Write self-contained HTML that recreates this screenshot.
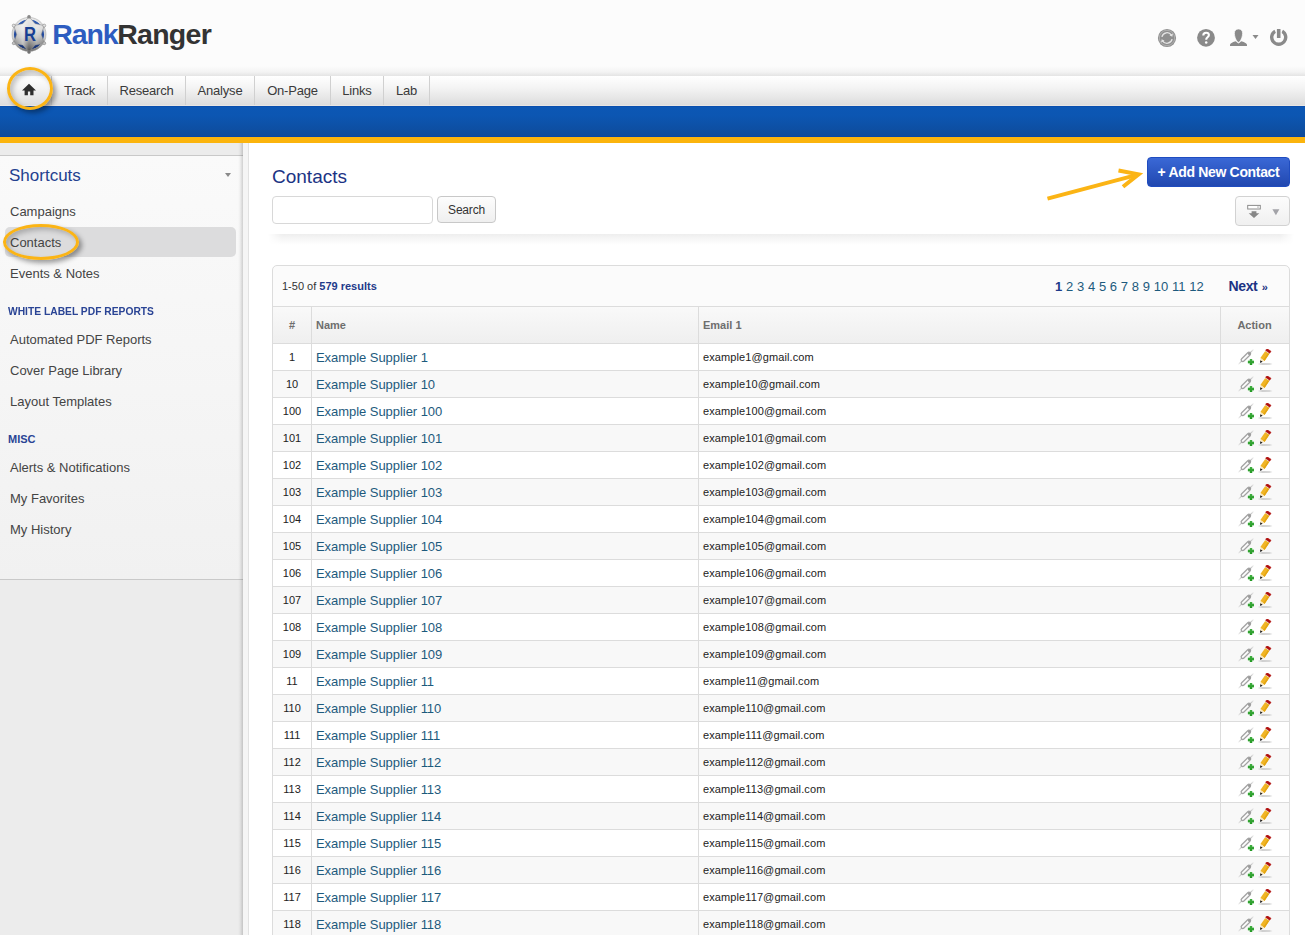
<!DOCTYPE html>
<html><head><meta charset="utf-8"><title>Contacts</title>
<style>
*{box-sizing:border-box;margin:0;padding:0}
html,body{width:1305px;height:935px;overflow:hidden;background:#fff;font-family:"Liberation Sans",sans-serif;}
body{position:relative}
.abs{position:absolute}
#hdr{position:absolute;left:0;top:0;width:1305px;height:76px;background:linear-gradient(#fcfcfc 0,#fcfcfc 66px,#f3f3f3 72px,#e4e4e4 76px)}
#nav{position:absolute;left:0;top:76px;width:1305px;height:30px;background:linear-gradient(#ffffff 0%,#f4f4f4 40%,#dddddd 100%);border-bottom:1px solid #e9e6e3}
.nv{position:absolute;top:0;height:29px;border-right:1px solid #d0d0d0;font-size:13px;line-height:29px;letter-spacing:-0.2px;color:#3a3a3a;text-align:center}
#blue{position:absolute;left:0;top:106px;width:1305px;height:31px;background:linear-gradient(#0c57b4 0%,#0c56b2 30%,#0e4b9b 100%);border-top:1px solid #0a4fae;border-bottom:1px solid #0746a6}
#yel{position:absolute;left:0;top:137px;width:1305px;height:6px;background:#fbb40d}
#side{position:absolute;left:0;top:143px;width:243px;height:792px;background:#ececec}
#sideshadow{position:absolute;left:238px;top:143px;width:5px;height:792px;background:linear-gradient(90deg,rgba(0,0,0,0) 0,rgba(0,0,0,0.04) 40%,rgba(0,0,0,0.17) 100%)}
#sidein{position:absolute;left:0;top:12px;width:243px;height:425px;background:linear-gradient(#fafafa,#f1f1f1);border-top:1px solid #c9c9c9;border-bottom:1px solid #c9c9c9}
#gut{position:absolute;left:243px;top:143px;width:6px;height:792px;background:#f5f5f5;border-right:1px solid #e2e2e2}
.sl{position:absolute;left:10px;font-size:13px;color:#444;line-height:16px;white-space:nowrap}
.sh{position:absolute;left:8px;font-size:11px;font-weight:bold;color:#2a4495;transform-origin:0 50%;line-height:13px;white-space:nowrap}
.r{position:absolute;left:273px;width:1016px;height:27px;border-bottom:1px solid #dcdcdc;background:#fff;font-size:11px;line-height:27px;color:#222}
.r.alt{background:#f8f8f8}
.r span{position:absolute;top:0;height:26px;white-space:nowrap}
.c1{left:0;width:38px;text-align:center}
.c2{left:43px;font-size:13px;letter-spacing:-0.05px;color:#1d5a7d}
.c3{left:430px;letter-spacing:0.1px}
.c4{left:947px;width:69px}
.ic1{position:absolute;left:18px;top:5px}
.ic2{position:absolute;left:37px;top:5px}
.vl{position:absolute;width:1px;background:#dcdcdc}
</style></head><body>
<svg width="0" height="0" style="position:absolute">
<defs>
<g id="plug"><defs><linearGradient id="pln" x1="0" y1="1" x2="1" y2="0"><stop offset="0" stop-color="#aaa" stop-opacity="0"/><stop offset="0.25" stop-color="#a8a8a8"/><stop offset="0.75" stop-color="#a8a8a8"/><stop offset="1" stop-color="#aaa" stop-opacity="0"/></linearGradient><linearGradient id="pgr" x1="0" y1="0" x2="0" y2="1"><stop offset="0" stop-color="#5cc05c"/><stop offset="1" stop-color="#158a15"/></linearGradient></defs><path d="M0 15.7 L15.9 0" stroke="url(#pln)" stroke-width="1.1" fill="none"/><path d="M4.8 10.9 L10.9 4.9" stroke="#a2a2a2" stroke-width="4.5" stroke-linecap="round" fill="none"/><path d="M4.8 10.9 L10.9 4.9" stroke="#fbfbfb" stroke-width="2.0" stroke-linecap="round" fill="none"/><circle cx="11.2" cy="4.7" r="1.3" fill="#9a9a9a"/><path d="M9.9 13h6.2M13 9.9v6.2" stroke="url(#pgr)" stroke-width="2.3"/><path d="M9.9 13h6.2M13 9.9v6.2" stroke="#2ea32e" stroke-width="2.3" opacity="0.55"/></g>
<g id="pencil"><defs><linearGradient id="psh" x1="0" y1="0" x2="1" y2="0"><stop offset="0" stop-color="#bdbdbd" stop-opacity="0.2"/><stop offset="0.3" stop-color="#bdbdbd"/><stop offset="0.8" stop-color="#c9c9c9"/><stop offset="1" stop-color="#d5d5d5" stop-opacity="0.2"/></linearGradient></defs><rect x="1.2" y="14.3" width="14" height="1.4" fill="url(#psh)"/><path d="M7.52 11.91 L12.37 4.82 L8.24 2.00 L3.39 9.09Z" fill="#f0b526"/><path d="M7.52 11.91 L12.37 4.82 L11.03 3.90 L6.18 10.99Z" fill="#e4a512"/><path d="M4.93 13.04 L7.52 11.91 L3.39 9.09 L3.28 11.92Z" fill="#f8e6c0"/><path d="M3.09 13.96 L5.58 12.76 L3.31 11.21Z" fill="#111"/><path d="M12.37 4.82 L12.76 4.24 L8.64 1.42 L8.24 2.00Z" fill="#e8eef0"/><path d="M12.76 4.24 L14.06 2.34 L9.94 -0.48 L8.64 1.42Z" fill="#b0100e" stroke="#b0100e" stroke-width="0.5" stroke-linejoin="round"/></g>
</defs></svg>

<div id="hdr"></div>
<!-- logo -->
<svg class="abs" style="left:8px;top:13px" width="42" height="42" viewBox="0 0 42 42">
<defs><linearGradient id="lg" x1="0" y1="0" x2="0" y2="1"><stop offset="0" stop-color="#e9e9e9"/><stop offset="0.35" stop-color="#d9d9d9"/><stop offset="0.58" stop-color="#b4b4b4"/><stop offset="0.78" stop-color="#808080"/><stop offset="1" stop-color="#484848"/></linearGradient>
<linearGradient id="lg2" x1="0" y1="0" x2="1" y2="0"><stop offset="0" stop-color="#fff" stop-opacity="0"/><stop offset="0.3" stop-color="#fff" stop-opacity="0.5"/><stop offset="0.5" stop-color="#fff" stop-opacity="0"/><stop offset="0.75" stop-color="#fff" stop-opacity="0.3"/><stop offset="1" stop-color="#fff" stop-opacity="0"/></linearGradient>
<linearGradient id="lg3" x1="0" y1="0" x2="0" y2="1"><stop offset="0" stop-color="#2d5bb4"/><stop offset="0.6" stop-color="#1e4599"/><stop offset="1" stop-color="#152f6e"/></linearGradient>
<linearGradient id="lg4" x1="0" y1="0" x2="0" y2="1"><stop offset="0" stop-color="#e6e6e6"/><stop offset="0.6" stop-color="#cfcfcf"/><stop offset="1" stop-color="#777"/></linearGradient></defs>
<g transform="translate(0,0.4)">
<circle cx="21" cy="21" r="15.2" fill="url(#lg3)"/>
<circle cx="21" cy="21" r="16" fill="none" stroke="url(#lg4)" stroke-width="2"/>
<circle cx="21" cy="21" r="17" fill="none" stroke="#a0a0a0" stroke-width="0.5"/>
<path d="M21.00,3.40 L27.15,10.35 L36.24,12.20 L33.30,21.00 L36.24,29.80 L27.15,31.65 L21.00,38.60 L14.85,31.65 L5.76,29.80 L8.70,21.00 L5.76,12.20 L14.85,10.35 Z" fill="url(#lg)" stroke="#868686" stroke-width="0.6" stroke-linejoin="round"/>
<path d="M21.00,3.40 L27.15,10.35 L36.24,12.20 L33.30,21.00 L36.24,29.80 L27.15,31.65 L21.00,38.60 L14.85,31.65 L5.76,29.80 L8.70,21.00 L5.76,12.20 L14.85,10.35 Z" fill="url(#lg2)"/>
<circle cx="21.00" cy="3.40" r="1.5" fill="#8a8a8a" stroke="#858585" stroke-width="0.6"/><circle cx="36.24" cy="12.20" r="1.5" fill="#e4e4e4" stroke="#858585" stroke-width="0.6"/><circle cx="36.24" cy="29.80" r="1.5" fill="#c4c4c4" stroke="#858585" stroke-width="0.6"/><circle cx="21.00" cy="38.60" r="1.5" fill="#6e6e6e" stroke="#858585" stroke-width="0.6"/><circle cx="5.76" cy="29.80" r="1.5" fill="#c4c4c4" stroke="#858585" stroke-width="0.6"/><circle cx="5.76" cy="12.20" r="1.5" fill="#e4e4e4" stroke="#858585" stroke-width="0.6"/>
<text x="21.9" y="27.5" text-anchor="middle" font-family="Liberation Sans" font-weight="bold" font-size="19.5" textLength="12" lengthAdjust="spacingAndGlyphs" fill="#173f94">R</text>
</g>
</svg>
<div class="abs" id="logot" style="left:52.3px;top:16px;font-size:28.5px;font-weight:bold;line-height:36px;letter-spacing:-1.1px;white-space:nowrap;color:#2d5cc0">Rank</div>
<div class="abs" id="logot2" style="left:117.2px;top:16px;font-size:28.5px;font-weight:bold;line-height:36px;letter-spacing:-0.72px;white-space:nowrap;color:#333">Ranger</div>

<!-- right icons -->
<svg class="abs" style="left:1156px;top:27px" width="22" height="22" viewBox="0 0 22 22"><circle cx="11" cy="11" r="9.1" fill="#8f8f8f"/><circle cx="11" cy="11" r="7.7" fill="none" stroke="#b2b2b2" stroke-width="0.9"/><path d="M5.9 9.8 A5.2 5.2 0 0 1 15.4 8.2" fill="none" stroke="#e6e6e6" stroke-width="1.3"/><path d="M16.1 12.2 A5.2 5.2 0 0 1 6.6 13.8" fill="none" stroke="#e6e6e6" stroke-width="1.3"/><path d="M16.9 6.6 L16.3 9.8 L13.5 8.3Z" fill="#e6e6e6"/><path d="M5.1 15.4 L5.7 12.2 L8.5 13.7Z" fill="#e6e6e6"/></svg>
<svg class="abs" style="left:1195px;top:27px" width="22" height="22" viewBox="0 0 22 22"><circle cx="11" cy="10.8" r="8.9" fill="#8a8a8a"/><path d="M8.3 8.4 C8.3 6.6 9.5 5.7 11.1 5.7 C12.8 5.7 13.9 6.7 13.9 8 C13.9 9.2 13.2 9.8 12.3 10.5 C11.5 11.1 11.2 11.6 11.2 12.8" fill="none" stroke="#fff" stroke-width="2.1"/><circle cx="11.2" cy="15.5" r="1.25" fill="#fff"/></svg>
<svg class="abs" style="left:1228px;top:27px" width="34" height="22" viewBox="0 0 34 22"><path d="M2 19 L2 17.7 C2.3 16.4 4 15.5 7.6 14.3 L10.5 16.4 L13.4 14.3 C17 15.5 18.7 16.4 19 17.7 L19 19Z" fill="#8a8a8a"/><path d="M10.5 2 C13 2 14.7 3.6 14.6 6.5 C14.5 9.5 13.3 12.3 12.5 13.4 L12.5 14 L10.5 15.4 L8.5 14 L8.5 13.4 C7.7 12.3 6.5 9.5 6.4 6.5 C6.3 3.6 8 2 10.5 2Z" fill="#8a8a8a" stroke="#fcfcfc" stroke-width="0.7"/><path d="M24.5 8 L30.5 8 L27.5 12Z" fill="#8a8a8a"/></svg>
<svg class="abs" style="left:1268px;top:27px" width="22" height="22" viewBox="0 0 22 22"><path d="M7.2 4.2 A7 7 0 1 0 14.2 4.2" fill="none" stroke="#8a8a8a" stroke-width="3.4"/><path d="M10.7 1.5 L10.7 12" stroke="#fcfcfc" stroke-width="5.8"/><path d="M10.7 2 L10.7 11" stroke="#8a8a8a" stroke-width="3.6"/></svg>

<div id="nav">
<div class="nv" style="left:0;width:52px;border-left:none"></div>
<div class="nv" style="left:52px;width:56px">Track</div>
<div class="nv" style="left:108px;width:78px">Research</div>
<div class="nv" style="left:186px;width:69px">Analyse</div>
<div class="nv" style="left:255px;width:76px">On-Page</div>
<div class="nv" style="left:331px;width:53px">Links</div>
<div class="nv" style="left:384px;width:46px">Lab</div>
</div>
<div id="blue"></div>
<div id="yel"></div>
<!-- home icon -->
<svg class="abs" style="left:21px;top:83px" width="16" height="14" viewBox="0 0 16 14"><path d="M8 0.8 L15 7.4 L12.5 7.4 L12.5 12.3 L9.2 12.3 L9.2 8.6 L6.9 8.6 L6.9 12.3 L3.6 12.3 L3.6 7.4 L1 7.4 Z" fill="#2e2e2e"/></svg>
<!-- circle highlight home -->
<div class="abs" style="left:6.7px;top:66.7px;width:46px;height:43px;border:3.2px solid #fbb415;border-radius:50%;box-shadow:3px 3px 5px rgba(0,0,0,0.38), inset 3px 3px 5px rgba(0,0,0,0.22)"></div>

<div id="side"><div id="sidein"></div></div>
<div id="gut"></div><div id="sideshadow"></div>
<div class="abs" style="left:9px;top:165.8px;font-size:17px;color:#24418f;line-height:20px">Shortcuts</div>
<svg class="abs" style="left:224px;top:172px" width="8" height="6" viewBox="0 0 8 6"><path d="M1 1 L7 1 L4 5Z" fill="#8a8a8a"/></svg>
<div class="abs" style="left:5px;top:227px;width:231px;height:30px;background:#dcdcdd;border-radius:5px"></div>
<div class="sl" style="top:204px">Campaigns</div>
<div class="sl" style="top:235px">Contacts</div>
<div class="sl" style="top:266px">Events &amp; Notes</div>
<div class="sh" style="top:305px;transform:scaleX(0.934)">WHITE LABEL PDF REPORTS</div>
<div class="sl" style="top:332px">Automated PDF Reports</div>
<div class="sl" style="top:363px">Cover Page Library</div>
<div class="sl" style="top:394px">Layout Templates</div>
<div class="sh" style="top:433px">MISC</div>
<div class="sl" style="top:460px">Alerts &amp; Notifications</div>
<div class="sl" style="top:491px">My Favorites</div>
<div class="sl" style="top:522px">My History</div>
<!-- contacts ellipse -->
<div class="abs" style="left:3px;top:224.2px;width:76px;height:35.6px;border:3px solid #fbb415;border-radius:50%;box-shadow:3px 3px 5px rgba(0,0,0,0.38), inset 3px 3px 5px rgba(0,0,0,0.22)"></div>

<!-- main -->
<div class="abs" style="left:272px;top:165px;font-size:19px;color:#1b3384;line-height:24px">Contacts</div>
<div class="abs" style="left:272px;top:196px;width:161px;height:28px;border:1px solid #d8d8d8;border-radius:4px;background:#fff"></div>
<div class="abs" style="left:437px;top:196px;width:59px;height:27px;border:1px solid #c8c8c8;border-radius:4px;background:linear-gradient(#fdfdfd,#efefef);font-size:12px;letter-spacing:-0.2px;line-height:27px;text-align:center;color:#333">Search</div>
<div class="abs" style="left:1147px;top:157px;width:143px;height:30px;border-radius:4px;background:linear-gradient(#3a68d6,#2148b0);border:1px solid #1f4cc0;color:#fff;font-weight:bold;font-size:14px;letter-spacing:-0.33px;line-height:28px;text-align:center;white-space:nowrap">+ Add New Contact</div>
<div class="abs" style="left:1235px;top:196px;width:55px;height:30px;border:1px solid #d2d2d2;border-radius:4px;background:linear-gradient(#fcfcfc,#f0f0f0)"></div>
<svg class="abs" style="left:1246px;top:204px" width="16" height="15" viewBox="0 0 16 15"><rect x="1.7" y="1.4" width="12.6" height="3.6" fill="#fff" stroke="#8c8c8c" stroke-width="1"/><rect x="11" y="2.3" width="2" height="1.6" fill="#cfcfcf"/><path d="M5.6 7.2 L10.4 7.2 L10.4 9.3 L13.3 9.3 L8 14 L2.7 9.3 L5.6 9.3Z" fill="#878787"/></svg>
<svg class="abs" style="left:1271.6px;top:208.8px" width="8" height="7" viewBox="0 0 8 7"><path d="M0.4 0.3 L7.4 0.3 L3.9 6.3Z" fill="#a3a3a8"/></svg>
<!-- arrow -->
<svg class="abs" style="left:1040px;top:160px" width="110" height="45" viewBox="0 0 110 45"><path d="M7.5 38.6 L97 14.9" stroke="#fbb415" stroke-width="4" fill="none"/><path d="M78.5 10.5 L98.6 14.3 L83 26.8" stroke="#fbb415" stroke-width="4" fill="none" stroke-linejoin="miter"/></svg>
<!-- shadow divider -->
<div class="abs" style="left:268px;top:234px;width:1026px;height:11px;background:linear-gradient(#eeeeee,#f7f7f7 50%,#ffffff);-webkit-mask-image:linear-gradient(90deg,transparent 0,#000 14px,#000 calc(100% - 14px),transparent 100%);mask-image:linear-gradient(90deg,transparent 0,#000 14px,#000 calc(100% - 14px),transparent 100%)"></div>

<!-- panel -->
<div class="abs" style="left:272px;top:265px;width:1018px;height:690px;border:1px solid #dcdcdc;border-radius:5px 5px 0 0;background:#fbfbfb"></div>
<div class="abs" style="left:282px;top:279px;font-size:11px;line-height:14px;color:#333;white-space:nowrap">1-50 of <b style="color:#1e3a8a">579 results</b></div>
<div class="abs" id="pg" style="left:1055px;top:279px;font-size:13px;line-height:15px;color:#1d5a7d;white-space:nowrap;word-spacing:0.13px"><b style="color:#1e3a8a">1</b> 2 3 4 5 6 7 8 9 10 11 12</div>
<div class="abs" id="nx" style="left:1228.6px;top:278.5px;font-size:14px;line-height:15px;color:#1b3384;font-weight:bold;letter-spacing:-0.4px;word-spacing:1px;white-space:nowrap">Next <span style="font-size:11px;position:relative;top:0px">»</span></div>
<!-- thead -->
<div class="abs" style="left:273px;top:306px;width:1016px;height:38px;border-top:1px solid #dcdcdc;border-bottom:1px solid #dcdcdc;background:linear-gradient(#f9f9f9,#efefef);font-size:11px;font-weight:bold;color:#6e6e6e;line-height:36px">
<span class="abs" style="left:0;width:38px;text-align:center">#</span>
<span class="abs" style="left:43px">Name</span>
<span class="abs" style="left:430px">Email 1</span>
<span class="abs" style="left:947px;width:69px;text-align:center">Action</span>
</div>
<div class="r" style="top:344px"><span class="c1">1</span><span class="c2">Example Supplier 1</span><span class="c3">example1@gmail.com</span><span class="c4"><svg class="ic1" width="16" height="16" viewBox="0 0 16 16"><use href="#plug"/></svg><svg class="ic2" width="16" height="16" viewBox="0 0 16 16"><use href="#pencil"/></svg></span></div>
<div class="r alt" style="top:371px"><span class="c1">10</span><span class="c2">Example Supplier 10</span><span class="c3">example10@gmail.com</span><span class="c4"><svg class="ic1" width="16" height="16" viewBox="0 0 16 16"><use href="#plug"/></svg><svg class="ic2" width="16" height="16" viewBox="0 0 16 16"><use href="#pencil"/></svg></span></div>
<div class="r" style="top:398px"><span class="c1">100</span><span class="c2">Example Supplier 100</span><span class="c3">example100@gmail.com</span><span class="c4"><svg class="ic1" width="16" height="16" viewBox="0 0 16 16"><use href="#plug"/></svg><svg class="ic2" width="16" height="16" viewBox="0 0 16 16"><use href="#pencil"/></svg></span></div>
<div class="r alt" style="top:425px"><span class="c1">101</span><span class="c2">Example Supplier 101</span><span class="c3">example101@gmail.com</span><span class="c4"><svg class="ic1" width="16" height="16" viewBox="0 0 16 16"><use href="#plug"/></svg><svg class="ic2" width="16" height="16" viewBox="0 0 16 16"><use href="#pencil"/></svg></span></div>
<div class="r" style="top:452px"><span class="c1">102</span><span class="c2">Example Supplier 102</span><span class="c3">example102@gmail.com</span><span class="c4"><svg class="ic1" width="16" height="16" viewBox="0 0 16 16"><use href="#plug"/></svg><svg class="ic2" width="16" height="16" viewBox="0 0 16 16"><use href="#pencil"/></svg></span></div>
<div class="r alt" style="top:479px"><span class="c1">103</span><span class="c2">Example Supplier 103</span><span class="c3">example103@gmail.com</span><span class="c4"><svg class="ic1" width="16" height="16" viewBox="0 0 16 16"><use href="#plug"/></svg><svg class="ic2" width="16" height="16" viewBox="0 0 16 16"><use href="#pencil"/></svg></span></div>
<div class="r" style="top:506px"><span class="c1">104</span><span class="c2">Example Supplier 104</span><span class="c3">example104@gmail.com</span><span class="c4"><svg class="ic1" width="16" height="16" viewBox="0 0 16 16"><use href="#plug"/></svg><svg class="ic2" width="16" height="16" viewBox="0 0 16 16"><use href="#pencil"/></svg></span></div>
<div class="r alt" style="top:533px"><span class="c1">105</span><span class="c2">Example Supplier 105</span><span class="c3">example105@gmail.com</span><span class="c4"><svg class="ic1" width="16" height="16" viewBox="0 0 16 16"><use href="#plug"/></svg><svg class="ic2" width="16" height="16" viewBox="0 0 16 16"><use href="#pencil"/></svg></span></div>
<div class="r" style="top:560px"><span class="c1">106</span><span class="c2">Example Supplier 106</span><span class="c3">example106@gmail.com</span><span class="c4"><svg class="ic1" width="16" height="16" viewBox="0 0 16 16"><use href="#plug"/></svg><svg class="ic2" width="16" height="16" viewBox="0 0 16 16"><use href="#pencil"/></svg></span></div>
<div class="r alt" style="top:587px"><span class="c1">107</span><span class="c2">Example Supplier 107</span><span class="c3">example107@gmail.com</span><span class="c4"><svg class="ic1" width="16" height="16" viewBox="0 0 16 16"><use href="#plug"/></svg><svg class="ic2" width="16" height="16" viewBox="0 0 16 16"><use href="#pencil"/></svg></span></div>
<div class="r" style="top:614px"><span class="c1">108</span><span class="c2">Example Supplier 108</span><span class="c3">example108@gmail.com</span><span class="c4"><svg class="ic1" width="16" height="16" viewBox="0 0 16 16"><use href="#plug"/></svg><svg class="ic2" width="16" height="16" viewBox="0 0 16 16"><use href="#pencil"/></svg></span></div>
<div class="r alt" style="top:641px"><span class="c1">109</span><span class="c2">Example Supplier 109</span><span class="c3">example109@gmail.com</span><span class="c4"><svg class="ic1" width="16" height="16" viewBox="0 0 16 16"><use href="#plug"/></svg><svg class="ic2" width="16" height="16" viewBox="0 0 16 16"><use href="#pencil"/></svg></span></div>
<div class="r" style="top:668px"><span class="c1">11</span><span class="c2">Example Supplier 11</span><span class="c3">example11@gmail.com</span><span class="c4"><svg class="ic1" width="16" height="16" viewBox="0 0 16 16"><use href="#plug"/></svg><svg class="ic2" width="16" height="16" viewBox="0 0 16 16"><use href="#pencil"/></svg></span></div>
<div class="r alt" style="top:695px"><span class="c1">110</span><span class="c2">Example Supplier 110</span><span class="c3">example110@gmail.com</span><span class="c4"><svg class="ic1" width="16" height="16" viewBox="0 0 16 16"><use href="#plug"/></svg><svg class="ic2" width="16" height="16" viewBox="0 0 16 16"><use href="#pencil"/></svg></span></div>
<div class="r" style="top:722px"><span class="c1">111</span><span class="c2">Example Supplier 111</span><span class="c3">example111@gmail.com</span><span class="c4"><svg class="ic1" width="16" height="16" viewBox="0 0 16 16"><use href="#plug"/></svg><svg class="ic2" width="16" height="16" viewBox="0 0 16 16"><use href="#pencil"/></svg></span></div>
<div class="r alt" style="top:749px"><span class="c1">112</span><span class="c2">Example Supplier 112</span><span class="c3">example112@gmail.com</span><span class="c4"><svg class="ic1" width="16" height="16" viewBox="0 0 16 16"><use href="#plug"/></svg><svg class="ic2" width="16" height="16" viewBox="0 0 16 16"><use href="#pencil"/></svg></span></div>
<div class="r" style="top:776px"><span class="c1">113</span><span class="c2">Example Supplier 113</span><span class="c3">example113@gmail.com</span><span class="c4"><svg class="ic1" width="16" height="16" viewBox="0 0 16 16"><use href="#plug"/></svg><svg class="ic2" width="16" height="16" viewBox="0 0 16 16"><use href="#pencil"/></svg></span></div>
<div class="r alt" style="top:803px"><span class="c1">114</span><span class="c2">Example Supplier 114</span><span class="c3">example114@gmail.com</span><span class="c4"><svg class="ic1" width="16" height="16" viewBox="0 0 16 16"><use href="#plug"/></svg><svg class="ic2" width="16" height="16" viewBox="0 0 16 16"><use href="#pencil"/></svg></span></div>
<div class="r" style="top:830px"><span class="c1">115</span><span class="c2">Example Supplier 115</span><span class="c3">example115@gmail.com</span><span class="c4"><svg class="ic1" width="16" height="16" viewBox="0 0 16 16"><use href="#plug"/></svg><svg class="ic2" width="16" height="16" viewBox="0 0 16 16"><use href="#pencil"/></svg></span></div>
<div class="r alt" style="top:857px"><span class="c1">116</span><span class="c2">Example Supplier 116</span><span class="c3">example116@gmail.com</span><span class="c4"><svg class="ic1" width="16" height="16" viewBox="0 0 16 16"><use href="#plug"/></svg><svg class="ic2" width="16" height="16" viewBox="0 0 16 16"><use href="#pencil"/></svg></span></div>
<div class="r" style="top:884px"><span class="c1">117</span><span class="c2">Example Supplier 117</span><span class="c3">example117@gmail.com</span><span class="c4"><svg class="ic1" width="16" height="16" viewBox="0 0 16 16"><use href="#plug"/></svg><svg class="ic2" width="16" height="16" viewBox="0 0 16 16"><use href="#pencil"/></svg></span></div>
<div class="r alt" style="top:911px"><span class="c1">118</span><span class="c2">Example Supplier 118</span><span class="c3">example118@gmail.com</span><span class="c4"><svg class="ic1" width="16" height="16" viewBox="0 0 16 16"><use href="#plug"/></svg><svg class="ic2" width="16" height="16" viewBox="0 0 16 16"><use href="#pencil"/></svg></span></div>
<div class="vl" style="left:311px;top:306px;height:629px"></div>
<div class="vl" style="left:698px;top:306px;height:629px"></div>
<div class="vl" style="left:1220px;top:306px;height:629px"></div>
</body></html>
